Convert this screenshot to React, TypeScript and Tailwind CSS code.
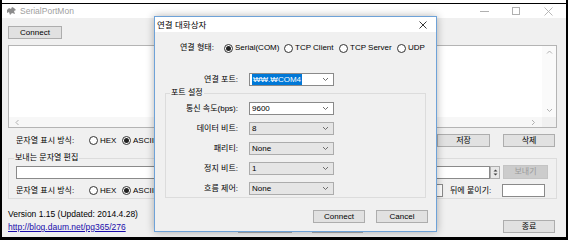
import React from 'react';

// 작은 화살표 (콤보박스, 스크롤바)
const Arrow = ({ dir = 'down', color = '#606060' }: { dir?: 'up' | 'down' | 'left' | 'right'; color?: string }) => {
  const d = {
    down: 'M1 2 L3.5 4.5 L6 2',
    up: 'M1 4.5 L3.5 2 L6 4.5',
    left: 'M4.5 1 L2 3.5 L4.5 6',
    right: 'M2 1 L4.5 3.5 L2 6',
  }[dir];
  return (
    <svg width="7" height="7" viewBox="0 0 7 7" className="shrink-0">
      <path d={d} fill="none" stroke={color} strokeWidth="0.9" />
    </svg>
  );
};

const Radio = ({ checked, label, className = '' }: { checked?: boolean; label: string; className?: string }) => (
  <div className={`flex items-center gap-[2px] ${className}`}>
    <span className="w-[9px] h-[9px] rounded-full border border-[#333] bg-white flex items-center justify-center shrink-0">
      {checked && <span className="w-[5px] h-[5px] rounded-full bg-[#222]"></span>}
    </span>
    <span className="whitespace-nowrap">{label}</span>
  </div>
);

const Btn = ({ children, className = '' }: { children?: React.ReactNode; className?: string }) => (
  <div className={`h-[13px] border border-[#adadad] bg-[#e1e1e1] flex items-center justify-center shrink-0 ${className}`}>
    {children}
  </div>
);

const Combo = ({ value, editable, selected }: { value: string; editable?: boolean; selected?: boolean }) => (
  <div
    className={`w-[85px] h-[13px] border flex items-center pl-[2px] pr-[4px] ml-[11px] ${
      editable ? 'bg-white border-[#8a8a8a]' : 'bg-[#e5e5e5] border-[#acacac]'
    }`}
  >
    {selected ? <span className="bg-[#0078d7] text-white px-[1px] leading-[11px]">{value}</span> : <span>{value}</span>}
    <span className="ml-auto">
      <Arrow />
    </span>
  </div>
);

export default function App() {
  return (
    <div className="relative w-[568px] h-[240px] overflow-hidden bg-white border-l-2 border-r-2 border-b-[3px] border-black text-[8px] leading-[10px] text-black font-['Liberation_Sans','Noto_Sans_CJK_KR',sans-serif]">
      {/* 잘린 상단 */}
      <div className="h-[3px] bg-white"></div>
      <div className="h-[1px] bg-black"></div>

      {/* 메인 창 타이틀 */}
      <div className="h-[14px] bg-white flex items-center pl-[5px]">
        <svg width="9" height="8" viewBox="0 0 9 8">
          <path d="M0 3 L2 1 L4 2 L5 0 L7 1 L9 3 L7 4 L8 7 L5 6 L3 8 L2 5 L0 6 Z" fill="#8c8c8c" />
        </svg>
        <span className="ml-[4px] text-[#a0a0a0] text-[8.5px]">SerialPortMon</span>
        <div className="ml-auto mr-[2px] flex">
          <div className="w-[32px] flex items-center justify-center">
            <span className="w-[9px] h-[1px] bg-[#b0b0b0]"></span>
          </div>
          <div className="w-[32px] flex items-center justify-center">
            <span className="w-[8px] h-[8px] border border-[#b0b0b0]"></span>
          </div>
          <div className="w-[32px] flex items-center justify-center">
            <svg width="9" height="9" viewBox="0 0 9 9">
              <path d="M0.5 0.5 L8.5 8.5 M8.5 0.5 L0.5 8.5" stroke="#b0b0b0" strokeWidth="0.9" />
            </svg>
          </div>
        </div>
      </div>

      {/* 메인 창 본문 */}
      <div className="h-[219px] bg-[#f0f0f0] pl-[6px] flex flex-col">
        <Btn className="mt-[8px] w-[54px]">Connect</Btn>

        {/* 수신 텍스트 영역 */}
        <div className="mt-[6px] w-[549px] h-[83px] border border-[#b4b4b4] bg-white flex flex-col">
          <div className="flex-1 flex">
            <div className="flex-1"></div>
            <div className="w-[14px] bg-[#fafafa] flex flex-col items-center justify-between py-[3px]">
              <Arrow dir="up" color="#a8a8a8" />
              <Arrow dir="down" color="#a8a8a8" />
            </div>
          </div>
          <div className="h-[10px] flex">
            <div className="flex-1 bg-[#f7f7f7] flex items-center justify-between px-[5px]">
              <Arrow dir="left" color="#a8a8a8" />
              <Arrow dir="right" color="#a8a8a8" />
            </div>
            <div className="w-[14px] bg-[#f0f0f0]"></div>
          </div>
        </div>

        {/* 표시 방식 / 저장 / 삭제 */}
        <div className="mt-[6px] w-[549px] h-[13px] flex items-center">
          <span className="ml-[8px] w-[73px] whitespace-nowrap">문자열 표시 방식:</span>
          <Radio label="HEX" className="w-[33px]" />
          <Radio label="ASCII" checked />
          <Btn className="ml-auto w-[53px]">저장</Btn>
          <Btn className="ml-[13px] mr-[2px] w-[52px]">삭제</Btn>
        </div>

        {/* 보내는 문자열 편집 */}
        <div className="relative mt-[11px] w-[549px] h-[41px] border border-[#dcdcdc] pt-[6px] flex flex-col">
          <span className="absolute -top-[6px] left-[5px] bg-[#f0f0f0] px-[1px]">보내는 문자열 편집</span>
          <div className="h-[14px] flex items-center">
            <div className="ml-[7px] w-[474px] h-[13px] border border-[#8a8a8a] bg-white"></div>
            <div className="w-[10px] h-[13px] border border-[#adadad] bg-[#e8e8e8] flex flex-col items-center justify-center">
              <svg width="5" height="9" viewBox="0 0 5 9">
                <path d="M0.5 3.5 L2.5 1.5 L4.5 3.5 Z M0.5 5.5 L2.5 7.5 L4.5 5.5 Z" fill="#404040" />
              </svg>
            </div>
            <div className="ml-[3px] w-[45px] h-[14px] border border-[#c4c4c4] bg-[#cccccc] text-[#9a9a9a] flex items-center justify-center">
              보내기
            </div>
          </div>
          <div className="mt-[5px] h-[13px] flex items-center">
            <span className="ml-[7px] w-[73px] whitespace-nowrap">문자열 표시 방식:</span>
            <Radio label="HEX" className="w-[33px]" />
            <Radio label="ASCII" checked className="w-[38px]" />
            <div className="w-[283px] h-[13px] border border-[#8a8a8a] bg-white"></div>
            <span className="ml-[7px] w-[45px] whitespace-nowrap">뒤에 붙이기:</span>
            <div className="ml-[7px] w-[43px] h-[13px] border border-[#8a8a8a] bg-white"></div>
          </div>
        </div>

        <div className="mt-[10px] h-[10px] whitespace-nowrap text-[8.5px]">Version 1.15 (Updated: 2014.4.28)</div>

        <div className="mt-[1px] w-[549px] h-[13px] flex">
          <div className="w-[230px] self-end">
            <span className="text-[#1a0dab] underline whitespace-nowrap text-[8.5px]">http://blog.daum.net/pg365/276</span>
          </div>
          <Btn className="w-[54px]"></Btn>
          <Btn className="ml-[20px] w-[51px]"></Btn>
          <Btn className="ml-auto mr-[2px] w-[52px]">종료</Btn>
        </div>
      </div>

      {/* 연결 대화상자 */}
      <div className="absolute left-[152px] top-[16px] w-[283px] h-[216px] border border-[#6ea2d8] bg-[#f0f0f0] shadow-[0_0_8px_rgba(0,0,0,0.3)] flex flex-col">
        <div className="h-[15px] bg-white flex items-center pl-[2px]">
          <span className="text-[8.5px]">연결 대화상자</span>
          <svg width="8" height="8" viewBox="0 0 8 8" className="ml-auto mr-[9px]">
            <path d="M0.5 0.5 L7.5 7.5 M7.5 0.5 L0.5 7.5" stroke="#222" strokeWidth="0.9" />
          </svg>
        </div>

        <div className="mt-[10px] h-[12px] flex items-center pl-[25px]">
          <span className="w-[38px] whitespace-nowrap">연결 형태:</span>
          <Radio label="Serial(COM)" checked className="ml-[6px] w-[60px]" />
          <Radio label="TCP Client" className="w-[55px]" />
          <Radio label="TCP Server" className="w-[58px]" />
          <Radio label="UDP" />
        </div>

        <div className="mt-[19px] h-[13px] flex items-center">
          <span className="w-[83px] text-right whitespace-nowrap">연결 포트:</span>
          <Combo value="₩₩.₩COM4" editable selected />
        </div>

        <div className="relative mt-[7px] ml-[10px] w-[261px] border border-[#dcdcdc] pt-[8px] pb-[2px] flex flex-col gap-[7px]">
          <span className="absolute -top-[6px] left-[4px] bg-[#f0f0f0] px-[1px]">포트 설정</span>
          {[
            ['통신 속도(bps):', '9600', true],
            ['데이터 비트:', '8', false],
            ['패리티:', 'None', false],
            ['정지 비트:', '1', false],
            ['흐름 제어:', 'None', false],
          ].map(([label, value, editable]) => (
            <div key={label as string} className="h-[13px] flex items-center">
              <span className="w-[72px] text-right whitespace-nowrap">{label}</span>
              <Combo value={value as string} editable={editable as boolean} />
            </div>
          ))}
        </div>

        <div className="mt-[12px] flex justify-end gap-[11px] pr-[8px]">
          <Btn className="w-[52px] border-[#0078d7]">Connect</Btn>
          <Btn className="w-[52px]">Cancel</Btn>
        </div>
      </div>
    </div>
  );
}
